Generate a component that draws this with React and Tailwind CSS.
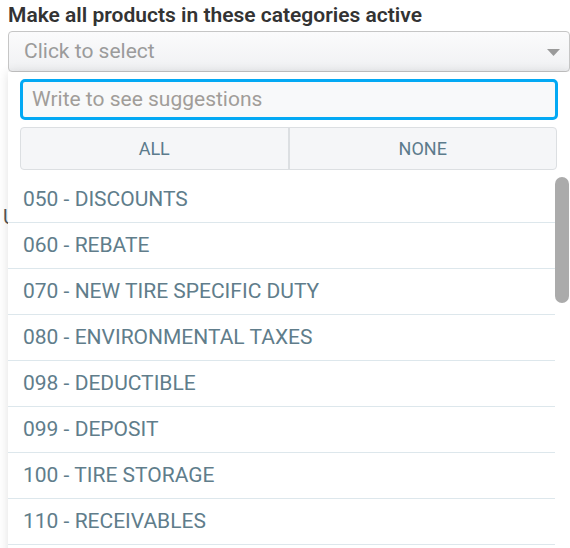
import React from "react";

const items = [
  "050 - DISCOUNTS",
  "060 - REBATE",
  "070 - NEW TIRE SPECIFIC DUTY",
  "080 - ENVIRONMENTAL TAXES",
  "098 - DEDUCTIBLE",
  "099 - DEPOSIT",
  "100 - TIRE STORAGE",
  "110 - RECEIVABLES",
  "120 - OTHER",
];

export default function App() {
  return (
    <div className="relative h-[548px] w-[570px] overflow-hidden bg-white font-['Roboto',sans-serif]">
      <div className="pl-2">
        <div className="text-[21px] font-semibold leading-[30px] text-[#333]">
          Make all products in these categories active
        </div>
        <div className="relative mt-px flex h-[41px] items-center rounded-[4px] border border-[#c6c6c6] bg-gradient-to-b from-[#fbfbfc] to-[#f0f1f3] pl-[15px]">
          <span className="text-[21px] text-[#9b9b9b]">Click to select</span>
          <svg className="absolute right-[9px] top-[17px]" width="13" height="7" viewBox="0 0 13 7">
            <polygon points="0,0 13,0 6.5,7" fill="#9a9a9a" />
          </svg>
        </div>
        <div className="mt-[133px] pl-0 text-[20px] leading-[24px] text-[#555] -ml-[5px]">
          Update
        </div>
      </div>

      <div className="absolute left-2 right-0 top-[72px] bg-white shadow-[0_0_10px_rgba(0,0,0,0.12)]">
        <div className="px-3 pt-[7px]">
          <div className="flex h-[41px] items-center rounded-[5px] border-[3px] border-[#03a9f4] bg-[#f8f9fa] pl-[9px] pr-[13px]">
            <span className="text-[21px] text-[#a19d99]">Write to see suggestions</span>
          </div>
          <div className="mt-[7px] flex h-[43px] w-[537px] overflow-hidden rounded-[4px] border border-[#dcdfe2] bg-[#f5f6f8] text-[18px] text-[#5c7b8c]">
            <div className="flex flex-1 items-center justify-center border-r-2 border-[#dcdfe2]">ALL</div>
            <div className="flex flex-1 items-center justify-center">NONE</div>
          </div>
        </div>
        <div className="mt-[7px] flex">
          <div className="flex-1">
            {items.map((t) => (
              <div
                key={t}
                className="flex h-[46px] items-center border-b border-[#dde7ec] pl-[15px] text-[21px] text-[#607d8b]"
              >
                {t}
              </div>
            ))}
          </div>
          <div className="w-[15px] pr-px">
            <div className="h-[126px] w-[14px] rounded-full bg-[#ababab]" />
          </div>
        </div>
      </div>
    </div>
  );
}
